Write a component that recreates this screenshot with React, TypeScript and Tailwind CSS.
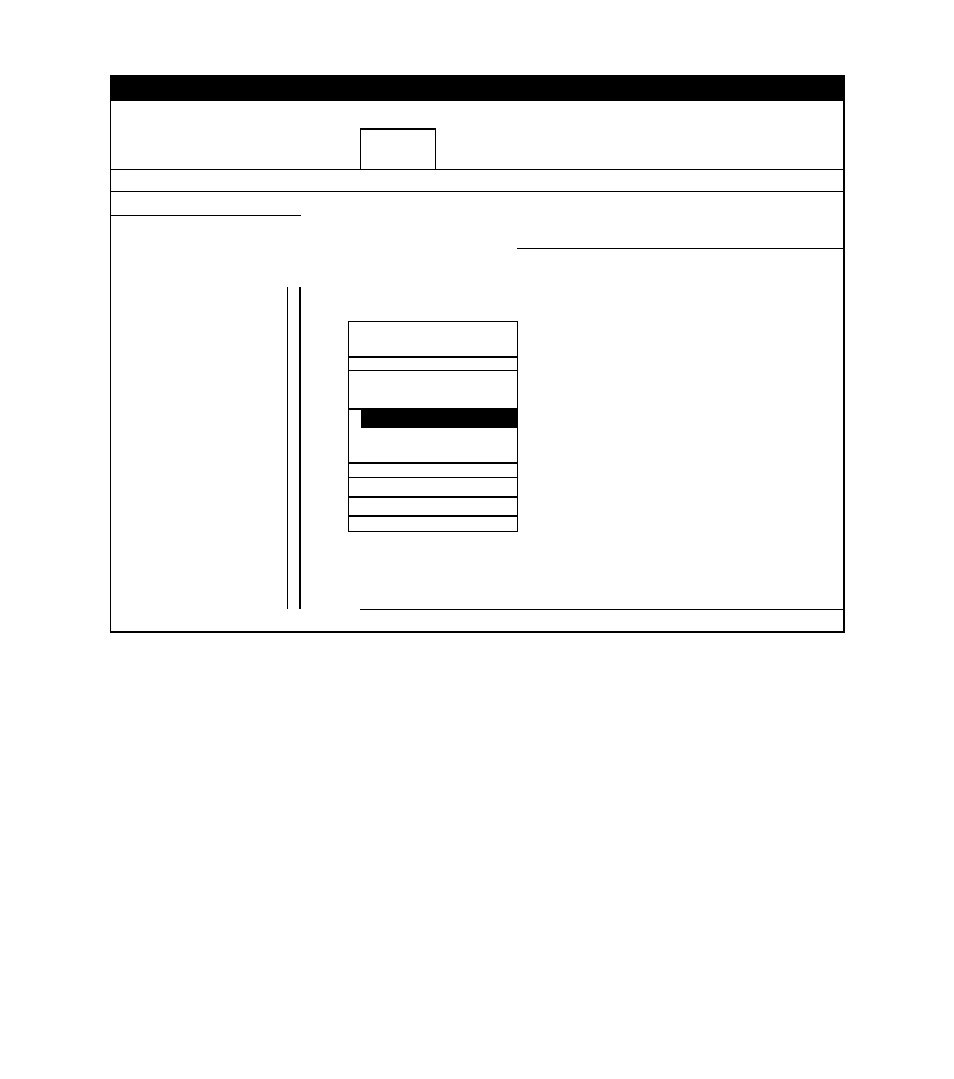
export default function App() {
  return (
    <div className="min-h-screen bg-white pl-[110px] pt-[75px]">
      <div className="w-[735px]">
        <div className="h-[26px] bg-black" />
        <div className="border-b-2 border-l border-r-2 border-black">
          <div className="h-[69px] border-b border-black pl-[249px] pt-[27px]">
            <div className="h-[41px] w-[76px] border-x border-t-2 border-black" />
          </div>
          <div className="h-[22px] border-b border-black" />
          <div className="h-[24px] w-[190px] border-b border-black" />
          <div className="ml-[406px] h-[33px] border-b border-black" />
          <div className="h-[38px]" />
          <div className="flex h-[322px] pl-[176px]">
            <div className="w-px bg-black" />
            <div className="ml-[11px] w-[2px] bg-black" />
            <div className="ml-[47px] pt-[34px]">
              <SettingsList />
            </div>
          </div>
          <div className="ml-[249px] border-t border-black" />
          <div className="h-[21px]" />
        </div>
      </div>
    </div>
  );
}

function SettingsList() {
  return (
    <div className="w-[170px] border border-black">
      <div className="h-[36px] border-b-2 border-black" />
      <div className="h-[13px] border-b border-black" />
      <div className="h-[37px]" />
      <div className="border-t-2 border-black pl-[12px]">
        <div className="h-[18px] bg-black" />
      </div>
      <div className="h-[36px] border-b-2 border-black" />
      <div className="h-[14px] border-b border-black" />
      <div className="h-[20px] border-b-2 border-black" />
      <div className="h-[19px] border-b-2 border-black" />
      <div className="h-[14px]" />
    </div>
  );
}
